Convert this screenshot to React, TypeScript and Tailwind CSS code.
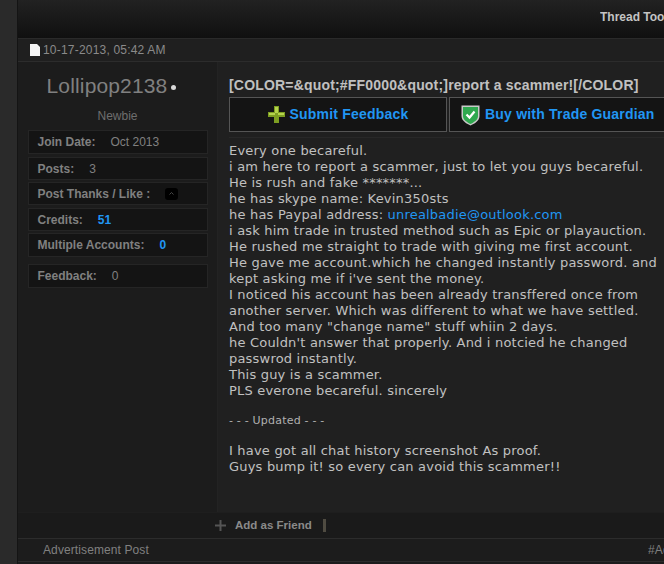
const sans = 'font-["Liberation_Sans",Arial,sans-serif]';

const lines = [
  'Every one becareful.',
  'i am here to report a scammer, just to let you guys becareful.',
  'He is rush and fake *******...',
  'he has skype name: Kevin350sts',
];

const lines2 = [
  'i ask him trade in trusted method such as Epic or playauction.',
  'He rushed me straight to trade with giving me first account.',
  'He gave me account.which he changed instantly password. and',
  "kept asking me if i've sent the money.",
  'I noticed his account has been already transffered once from',
  'another server. Which was different to what we have settled.',
  'And too many "change name" stuff whiin 2 days.',
  "he Couldn't answer that properly. And i notcied he changed",
  'passwrod instantly.',
  'This guy is a scammer.',
  'PLS everone becareful. sincerely',
];

function StatRow({ label, value, gap, blue, className }: { label: string; value?: string; gap: string; blue?: boolean; className: string }) {
  return (
    <div className={`flex items-center w-[180px] border border-[#252525] bg-[#141414] pl-[9px] text-[12px] text-[#808080] ${className}`}>
      <span className="font-bold whitespace-nowrap">{label}</span>
      {value && <span className={`${gap} whitespace-nowrap ${blue ? 'text-[#2196f3] font-bold' : ''}`}>{value}</span>}
    </div>
  );
}

export default function App() {
  return (
    <div className={`h-[564px] w-[664px] overflow-hidden bg-[#2a2a2a] pl-[17px] ${sans}`}>
      <div className="h-full border-l border-[#141414] bg-[#1c1c1c]">
        {/* thread tools bar */}
        <div className="flex h-[39px] justify-end overflow-hidden bg-gradient-to-b from-[#222222] to-[#101010] border-b border-[#2a2a2a] pt-[10px]">
          <span className="w-[64px] overflow-hidden whitespace-nowrap text-[12px] font-bold leading-[14px] text-[#c4c4c4]">Thread Tools</span>
        </div>

        {/* date */}
        <div className="flex h-[23px] items-center border-b border-[#2c2c2c] bg-[#1f1f1f] pl-[12px] text-[12px] tracking-[0.2px] text-[#8a8a8a]">
          <svg width="10" height="12" viewBox="0 0 10 12">
            <path d="M0 0H7L10 3V12H0Z" fill="#f4f4f4" />
          </svg>
          <span className="ml-[3px]">10-17-2013, 05:42 AM</span>
        </div>

        <div className="flex h-[451px] border-b border-[#1e1e1e]">
          {/* user column */}
          <div className="flex w-[200px] flex-none flex-col items-center border-r border-[#232323] bg-[#1c1c1c]">
            <div className="mt-[11px] mr-[12px] flex h-[25px] items-center text-[21px] tracking-[0.15px] text-[#808080]">
              Lollipop2138
              <span className="ml-[4px] mt-[3px] h-[5px] w-[5px] rounded-full bg-[#d8d8d8]" />
            </div>
            <div className="mt-[11px] h-[14px] text-[12px] leading-[14px] text-[#6e6e6e]">Newbie</div>
            <div className="mt-[7px] flex flex-col">
              <StatRow label="Join Date:" value="Oct 2013" gap="ml-[15px] font-normal" className="mb-[3px] h-[24px]" />
              <StatRow label="Posts:" value="3" gap="ml-[15px]" className="mb-[2px] h-[23px]" />
              <div className="mb-[3px] flex h-[23px] w-[180px] items-center border border-[#252525] bg-[#141414] pl-[9px] text-[12px] font-bold text-[#808080]">
                Post Thanks / Like :
                <span className="ml-[15px] flex h-[12px] w-[13px] items-center justify-center rounded-[3px] bg-black">
                  <svg width="5" height="3" viewBox="0 0 5 3"><path d="M0.5 2.5L2.5 0.5L4.5 2.5" fill="none" stroke="#666666" strokeWidth="0.7" /></svg>
                </span>
              </div>
              <StatRow label="Credits:" value="51" gap="ml-[15px]" blue className="mb-[2px] h-[23px]" />
              <StatRow label="Multiple Accounts:" value="0" gap="ml-[15px]" blue className="mb-[7px] h-[24px]" />
              <StatRow label="Feedback:" value="0" gap="ml-[15px] font-normal" className="h-[24px]" />
            </div>
          </div>

          {/* post column */}
          <div className="min-w-0 flex-1 bg-[#202020] pl-[11px]">
            <h2 className="mt-[15px] h-[15px] whitespace-nowrap text-[14px] font-bold leading-[16px] tracking-[0.18px] text-[#c0c0c0]">
              [COLOR=&amp;quot;#FF0000&amp;quot;]report a scammer![/COLOR]
            </h2>
            <div className="mt-[5px] flex gap-[2px]">
              <div className="flex h-[35px] w-[218px] flex-none items-center justify-center gap-[5px] border border-[#555555] bg-[#141414]">
                <svg width="17" height="17" viewBox="0 0 17 17">
                  <path d="M6 0H11V6H17V11H11V17H6V11H0V6H6Z" fill="#7d9e22" />
                  <path d="M7 1H10V7H16V9H10V7H7V9H1V7H7Z" fill="#b5d34d" />
                </svg>
                <span className="text-[14px] font-bold tracking-[0.2px] text-[#2196f3]">Submit Feedback</span>
              </div>
              <div className="flex h-[35px] w-[230px] flex-none items-center gap-[5px] border border-[#555555] bg-[#141414] pl-[11px]">
                <svg width="19" height="22" viewBox="0 0 19 22">
                  <path d="M0.5 1.5H18.5V12C18.5 17 13 20 9.5 21.5C6 20 0.5 17 0.5 12Z" fill="#c9c9c9" />
                  <path d="M2 3H17V12C17 16 12.5 18.5 9.5 20C6.5 18.5 2 16 2 12Z" fill="#2fa84f" />
                  <path d="M5.5 10.5L8.5 13.5L13.5 7.5" fill="none" stroke="#ffffff" strokeWidth="2.2" />
                </svg>
                <span className="whitespace-nowrap text-[14px] font-bold tracking-[0.2px] text-[#2196f3]">Buy with Trade Guardian</span>
              </div>
            </div>
            <div className='mt-[5px] border-t border-[#282828] pt-[5px] font-["DejaVu_Sans",Verdana,sans-serif] text-[13px] leading-[16px] tracking-[0.2px] whitespace-nowrap text-[#c0c0c0]'>
              {lines.map((l) => <div key={l}>{l}</div>)}
              <div>he has Paypal address: <span className="text-[#2196f3]">unrealbadie@outlook.com</span></div>
              {lines2.map((l) => <div key={l}>{l}</div>)}
              <div className="mt-[14px] text-[11px] text-[#b0b0b0]">- - - Updated - - -</div>
              <div className="mt-[14px]">I have got all chat history screenshot As proof.</div>
              <div>Guys bump it! so every can avoid this scammer!!</div>
            </div>
          </div>
        </div>

        {/* friend bar */}
        <div className="flex h-[26px] items-center border-b border-[#2c2c2c] bg-[#1a1a1a] pl-[197px]">
          <svg width="11" height="11" viewBox="0 0 11 11"><path d="M4.5 0H6.5V4.5H11V6.5H6.5V11H4.5V6.5H0V4.5H4.5Z" fill="#555555" /></svg>
          <span className="ml-[9px] text-[11.5px] font-bold text-[#8a8a8a]">Add as Friend</span>
          <span className="ml-[11px] h-[13px] w-[3px] bg-[#4f4b41]" />
        </div>

        {/* advert row */}
        <div className="flex h-[23px] items-center justify-between border-b border-[#2c2c2c] bg-[#1c1c1c] pl-[25px] text-[12px] tracking-[0.1px] text-[#808080]">
          <span>Advertisement Post</span>
          <span className="w-[16px] overflow-hidden whitespace-nowrap">#Ad</span>
        </div>
      </div>
    </div>
  );
}
